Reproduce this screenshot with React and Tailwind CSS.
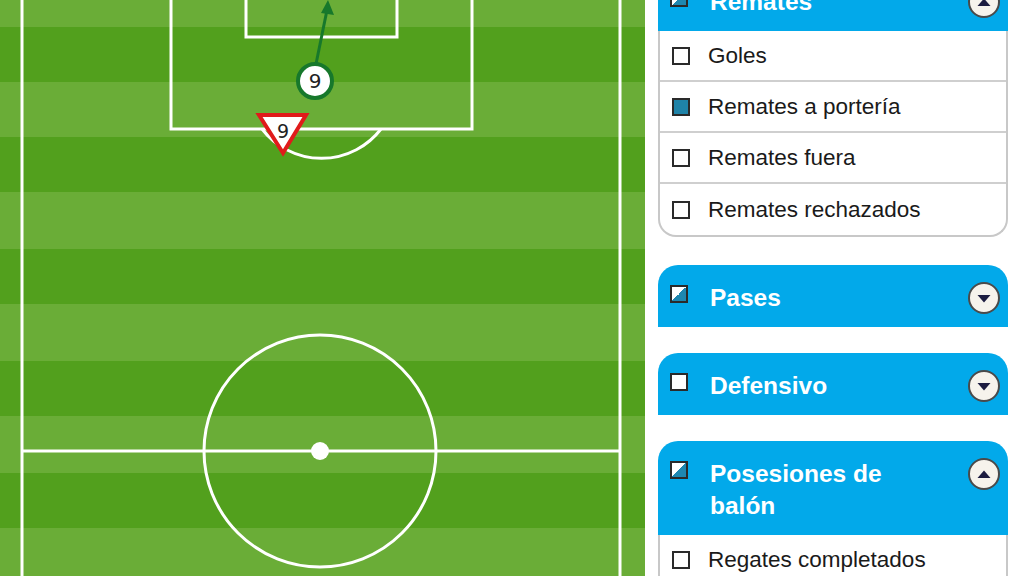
import React from 'react';

const STRIPES = [27, 137, 249, 361, 473];

const Pitch = () => (
  <svg width="645" height="576" viewBox="0 0 645 576" className="block">
    <rect x="0" y="0" width="645" height="576" fill="#6aad37" />
    {STRIPES.map(y => (
      <rect key={y} x="0" y={y} width="645" height="55" fill="#52a01d" />
    ))}
    <g fill="none" stroke="#fff" strokeWidth="3">
      <line x1="22" y1="-5" x2="22" y2="580" />
      <line x1="620" y1="-5" x2="620" y2="580" />
      <line x1="22" y1="451" x2="620" y2="451" />
      <circle cx="320" cy="451" r="116" />
      <path d="M171 -5 V129 H472 V-5" />
      <path d="M246 -5 V37 H397 V-5" />
      <path d="M262 129 A75 75 0 0 0 381 129" />
    </g>
    <circle cx="320" cy="451" r="9" fill="#fff" />
    {/* shot arrow */}
    <line x1="316" y1="64" x2="327" y2="10" stroke="#17782b" strokeWidth="3" />
    <path d="M328 0 L321 13 L334 15 Z" fill="#17782b" />
    <circle cx="315" cy="81" r="17" fill="#fff" stroke="#17782b" strokeWidth="4" />
    <text x="315" y="88" textAnchor="middle" fontSize="20" fontFamily="DejaVu Sans, sans-serif" fill="#222">9</text>
    {/* blocked shot */}
    <path d="M259 115 L306 115 L283 153 Z" fill="#fff" stroke="#e01b1b" strokeWidth="4" strokeLinejoin="miter" />
    <text x="283" y="138" textAnchor="middle" fontSize="19" fontFamily="DejaVu Sans, sans-serif" fill="#222">9</text>
  </svg>
);

const Toggle = ({ open }) => (
  <div className="w-[32px] h-[32px] rounded-full border-2 border-[#4a4a4a] bg-[#f6f3ec] flex items-center justify-center shrink-0">
    <svg width="14" height="9" viewBox="0 0 14 9">
      {open ? <path d="M7 0.5 L13.5 8 H0.5 Z" fill="#1c1c40" /> : <path d="M0.5 1 H13.5 L7 8.5 Z" fill="#1c1c40" />}
    </svg>
  </div>
);

const Box = ({ state }) => {
  if (state === 'partial') {
    return (
      <div className="w-[18px] h-[18px] border-2 border-[#2a2a2a] shrink-0 bg-[linear-gradient(135deg,#ffffff_50%,#1e87b0_50%)]" />
    );
  }
  if (state === 'on') {
    return <div className="w-[18px] h-[18px] border-2 border-[#2a2a2a] bg-[#1f83a8] shrink-0" />;
  }
  return <div className="w-[18px] h-[18px] border-2 border-[#2a2a2a] bg-white shrink-0" />;
};

const Header = ({ title, box, open }) => (
  <div className="bg-[#02a9ea] rounded-t-[20px] flex items-start pl-[12px] pr-[8px] pt-[17px] pb-[13px] min-h-[62px]">
    <div className="pt-[3px]"><Box state={box} /></div>
    <div className="flex-1">
      <div className="max-w-[210px] pl-[22px] text-white font-bold text-[24.5px] leading-[32px]">{title}</div>
    </div>
    <Toggle open={open} />
  </div>
);

const Row = ({ label, box, last }) => (
  <div className={`flex items-center h-[51px] pl-[12px] ${last ? '' : 'border-b-2 border-[#cfcfcf]'}`}>
    <Box state={box} />
    <span className="pl-[18px] text-[22.5px] text-[#1a1a1a]">{label}</span>
  </div>
);

export default function App() {
  return (
    <div className="w-[1024px] h-[576px] overflow-hidden bg-white flex" style={{ fontFamily: '"Liberation Sans", Arial, sans-serif' }}>
      <Pitch />
      <div className="w-[350px] ml-[13px] mt-[-31px] flex flex-col">
        <div>
          <Header title="Remates" box="partial" open />
          <div className="border-2 border-t-0 border-[#c8c8c8] rounded-b-[18px]">
            <Row label="Goles" box="off" />
            <Row label="Remates a portería" box="on" />
            <Row label="Remates fuera" box="off" />
            <Row label="Remates rechazados" box="off" last />
          </div>
        </div>
        <div className="mt-[28px]">
          <Header title="Pases" box="partial" />
        </div>
        <div className="mt-[26px]">
          <Header title="Defensivo" box="off" />
        </div>
        <div className="mt-[26px]">
          <Header title="Posesiones de balón" box="partial" open />
          <div className="border-2 border-t-0 border-[#c8c8c8]">
            <Row label="Regates completados" box="off" />
          </div>
        </div>
      </div>
    </div>
  );
}
